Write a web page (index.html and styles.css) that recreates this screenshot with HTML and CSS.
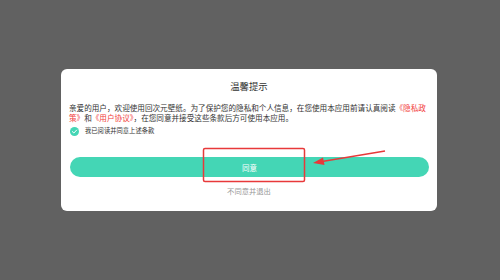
FILE: index.html
```html
<!DOCTYPE html>
<html lang="zh">
<head>
<meta charset="utf-8">
<link rel="stylesheet" href="styles.css">
</head>
<body>
<div class="card">
  <div class="title">温馨提示</div>
  <p class="text">亲爱的用户，欢迎使用回次元壁纸。为了保护您的隐私和个人信息，在您使用本应用前请认真阅读<span class="link">《隐私政策》</span>和<span class="link">《用户协议》</span>，在您同意并接受这些条款后方可使用本应用。</p>
  <div class="agree-row">
    <span class="check">
      <svg viewBox="0 0 10 10" width="9" height="9"><circle cx="5" cy="5" r="5" fill="#44d6b5"/><path d="M2.6 5.1 L4.3 6.7 L7.4 3.4" fill="none" stroke="#fff" stroke-width="1.1" stroke-linecap="round" stroke-linejoin="round"/></svg>
    </span>
    <span class="agree-text">我已阅读并同意上述条款</span>
  </div>
  <div class="btn">同意</div>
  <div class="decline">不同意并退出</div>
</div>
<svg class="annot" width="500" height="280" viewBox="0 0 500 280">
  <rect x="203.5" y="148.5" width="101" height="33" rx="1.5" fill="none" stroke="#e8393a" stroke-width="1.5"/>
  <line x1="385" y1="151" x2="322" y2="161.5" stroke="#e8393a" stroke-width="1.6"/>
  <polygon points="313,163 323,157.5 324.5,165" fill="#e8393a"/>
</svg>
</body>
</html>
```
FILE: styles.css
```css
html, body {
  margin: 0;
  padding: 0;
}
body {
  width: 500px;
  height: 280px;
  background: #616161;
  font-family: "Noto Sans CJK SC", "Noto Sans", sans-serif;
  color: #333;
  overflow: hidden;
  position: relative;
}
.card {
  margin: 69px 0 0 61px;
  width: 376px;
  height: 142px;
  background: #fff;
  border-radius: 6px;
  box-sizing: border-box;
  padding: 11px 8px 0 8px;
}
.title {
  text-align: center;
  font-size: 9.4px;
  line-height: 12px;
  color: #333;
}
.text {
  margin: 11px 0 0 0;
  font-size: 7.6px;
  line-height: 10px;
  color: #333;
}
.link {
  color: #f23d3d;
}
.agree-row {
  margin-top: 3px;
  height: 10px;
  display: flex;
  align-items: center;
  gap: 6px;
  padding-left: 1px;
}
.check {
  display: flex;
  width: 9px;
  height: 9px;
}
.agree-text {
  font-size: 6.3px;
  line-height: 10px;
  color: #333;
}
.btn {
  margin: 21px 0 0 1px;
  width: 359px;
  height: 20px;
  border-radius: 10px;
  background: #44d6b5;
  color: #fff;
  font-size: 7.5px;
  display: flex;
  align-items: center;
  justify-content: center;
}
.decline {
  margin-top: 9px;
  text-align: center;
  font-size: 7.3px;
  line-height: 10px;
  color: #999;
}
.annot {
  position: absolute;
  left: 0;
  top: 0;
}
```
